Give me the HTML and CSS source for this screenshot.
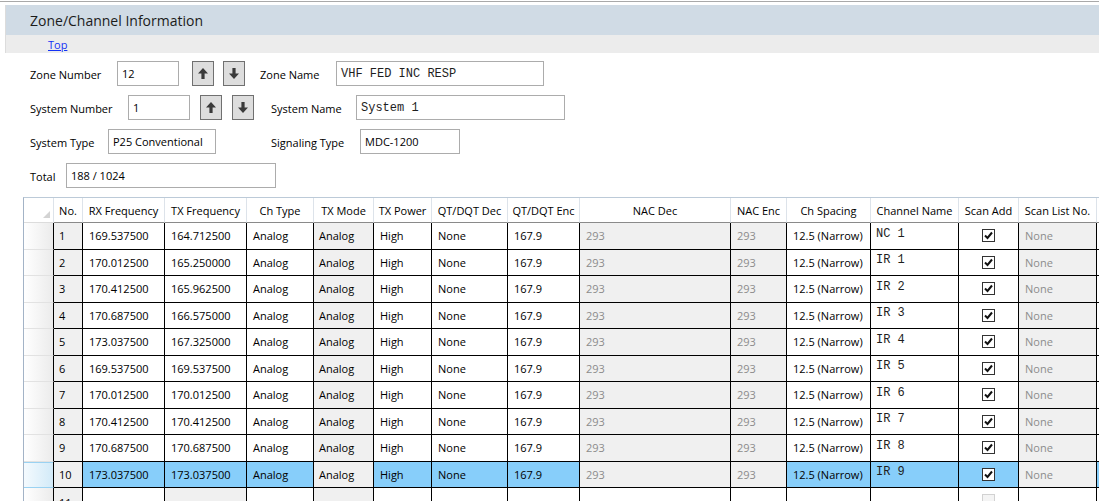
FILE: index.html
```html
<!DOCTYPE html>
<html>
<head>
<meta charset="utf-8">
<title>Zone/Channel Information</title>
<link rel="stylesheet" href="styles.css">
</head>
<body>
<div class="page">
  <div class="head">
    <div class="title-bar">Zone/Channel Information</div>
    <div class="nav-bar"><a href="#">Top</a></div>
  </div>

  <div class="form">
    <div class="frow">
      <span class="lbl w-zn">Zone Number</span>
      <span class="field w-62">12</span>
      <button class="spin ml-13"><svg width="10" height="11" viewBox="0 0 10 11"><path d="M5 0 L10 5.5 L6.6 5.5 L6.6 11 L3.4 11 L3.4 5.5 L0 5.5 Z" fill="#3a3a3a"/></svg></button>
      <button class="spin ml-9"><svg width="10" height="11" viewBox="0 0 10 11"><path d="M5 11 L10 5.5 L6.6 5.5 L6.6 0 L3.4 0 L3.4 5.5 L0 5.5 Z" fill="#3a3a3a"/></svg></button>
      <span class="lbl w-znm ml-15">Zone Name</span>
      <span class="field mono w-208">VHF FED INC RESP</span>
    </div>
    <div class="frow">
      <span class="lbl w-sn">System Number</span>
      <span class="field w-62">1</span>
      <button class="spin ml-10"><svg width="10" height="11" viewBox="0 0 10 11"><path d="M5 0 L10 5.5 L6.6 5.5 L6.6 11 L3.4 11 L3.4 5.5 L0 5.5 Z" fill="#3a3a3a"/></svg></button>
      <button class="spin ml-10"><svg width="10" height="11" viewBox="0 0 10 11"><path d="M5 11 L10 5.5 L6.6 5.5 L6.6 0 L3.4 0 L3.4 5.5 L0 5.5 Z" fill="#3a3a3a"/></svg></button>
      <span class="lbl w-snm ml-17">System Name</span>
      <span class="field mono w-209">System 1</span>
    </div>
    <div class="frow">
      <span class="lbl w-st">System Type</span>
      <span class="field w-108">P25 Conventional</span>
      <span class="lbl w-sg ml-55">Signaling Type</span>
      <span class="field w-100">MDC-1200</span>
    </div>
    <div class="frow">
      <span class="lbl w-tot">Total</span>
      <span class="field w-210">188 / 1024</span>
    </div>
  </div>

  <div class="grid-wrap">
    <div class="gr hd">
      <div class="h corner"><span class="tri"></span></div>
      <div class="h">No.</div>
      <div class="h">RX Frequency</div>
      <div class="h">TX Frequency</div>
      <div class="h">Ch Type</div>
      <div class="h">TX Mode</div>
      <div class="h">TX Power</div>
      <div class="h">QT/DQT Dec</div>
      <div class="h">QT/DQT Enc</div>
      <div class="h">NAC Dec</div>
      <div class="h">NAC Enc</div>
      <div class="h">Ch Spacing</div>
      <div class="h">Channel Name</div>
      <div class="h">Scan Add</div>
      <div class="h">Scan List No.</div>
      <div class="h"></div>
    </div>

    <div class="gr">
      <div class="rh"></div><div class="c ro">1</div><div class="c e">169.537500</div><div class="c e">164.712500</div><div class="c e">Analog</div><div class="c ro">Analog</div><div class="c e">High</div><div class="c e">None</div><div class="c e">167.9</div><div class="c dim">293</div><div class="c dim">293</div><div class="c e">12.5 (Narrow)</div><div class="c e mono">NC 1</div><div class="c e ctr"><span class="cb"><svg width="11" height="11" viewBox="0 0 11 11"><path d="M2 5.5 L4.5 8 L9 2.5" fill="none" stroke="#111" stroke-width="2"/></svg></span></div><div class="c dim">None</div><div class="c e"></div>
    </div>
    <div class="gr">
      <div class="rh"></div><div class="c ro">2</div><div class="c e">170.012500</div><div class="c e">165.250000</div><div class="c e">Analog</div><div class="c ro">Analog</div><div class="c e">High</div><div class="c e">None</div><div class="c e">167.9</div><div class="c dim">293</div><div class="c dim">293</div><div class="c e">12.5 (Narrow)</div><div class="c e mono">IR 1</div><div class="c e ctr"><span class="cb"><svg width="11" height="11" viewBox="0 0 11 11"><path d="M2 5.5 L4.5 8 L9 2.5" fill="none" stroke="#111" stroke-width="2"/></svg></span></div><div class="c dim">None</div><div class="c e"></div>
    </div>
    <div class="gr">
      <div class="rh"></div><div class="c ro">3</div><div class="c e">170.412500</div><div class="c e">165.962500</div><div class="c e">Analog</div><div class="c ro">Analog</div><div class="c e">High</div><div class="c e">None</div><div class="c e">167.9</div><div class="c dim">293</div><div class="c dim">293</div><div class="c e">12.5 (Narrow)</div><div class="c e mono">IR 2</div><div class="c e ctr"><span class="cb"><svg width="11" height="11" viewBox="0 0 11 11"><path d="M2 5.5 L4.5 8 L9 2.5" fill="none" stroke="#111" stroke-width="2"/></svg></span></div><div class="c dim">None</div><div class="c e"></div>
    </div>
    <div class="gr">
      <div class="rh"></div><div class="c ro">4</div><div class="c e">170.687500</div><div class="c e">166.575000</div><div class="c e">Analog</div><div class="c ro">Analog</div><div class="c e">High</div><div class="c e">None</div><div class="c e">167.9</div><div class="c dim">293</div><div class="c dim">293</div><div class="c e">12.5 (Narrow)</div><div class="c e mono">IR 3</div><div class="c e ctr"><span class="cb"><svg width="11" height="11" viewBox="0 0 11 11"><path d="M2 5.5 L4.5 8 L9 2.5" fill="none" stroke="#111" stroke-width="2"/></svg></span></div><div class="c dim">None</div><div class="c e"></div>
    </div>
    <div class="gr">
      <div class="rh"></div><div class="c ro">5</div><div class="c e">173.037500</div><div class="c e">167.325000</div><div class="c e">Analog</div><div class="c ro">Analog</div><div class="c e">High</div><div class="c e">None</div><div class="c e">167.9</div><div class="c dim">293</div><div class="c dim">293</div><div class="c e">12.5 (Narrow)</div><div class="c e mono">IR 4</div><div class="c e ctr"><span class="cb"><svg width="11" height="11" viewBox="0 0 11 11"><path d="M2 5.5 L4.5 8 L9 2.5" fill="none" stroke="#111" stroke-width="2"/></svg></span></div><div class="c dim">None</div><div class="c e"></div>
    </div>
    <div class="gr">
      <div class="rh"></div><div class="c ro">6</div><div class="c e">169.537500</div><div class="c e">169.537500</div><div class="c e">Analog</div><div class="c ro">Analog</div><div class="c e">High</div><div class="c e">None</div><div class="c e">167.9</div><div class="c dim">293</div><div class="c dim">293</div><div class="c e">12.5 (Narrow)</div><div class="c e mono">IR 5</div><div class="c e ctr"><span class="cb"><svg width="11" height="11" viewBox="0 0 11 11"><path d="M2 5.5 L4.5 8 L9 2.5" fill="none" stroke="#111" stroke-width="2"/></svg></span></div><div class="c dim">None</div><div class="c e"></div>
    </div>
    <div class="gr">
      <div class="rh"></div><div class="c ro">7</div><div class="c e">170.012500</div><div class="c e">170.012500</div><div class="c e">Analog</div><div class="c ro">Analog</div><div class="c e">High</div><div class="c e">None</div><div class="c e">167.9</div><div class="c dim">293</div><div class="c dim">293</div><div class="c e">12.5 (Narrow)</div><div class="c e mono">IR 6</div><div class="c e ctr"><span class="cb"><svg width="11" height="11" viewBox="0 0 11 11"><path d="M2 5.5 L4.5 8 L9 2.5" fill="none" stroke="#111" stroke-width="2"/></svg></span></div><div class="c dim">None</div><div class="c e"></div>
    </div>
    <div class="gr">
      <div class="rh"></div><div class="c ro">8</div><div class="c e">170.412500</div><div class="c e">170.412500</div><div class="c e">Analog</div><div class="c ro">Analog</div><div class="c e">High</div><div class="c e">None</div><div class="c e">167.9</div><div class="c dim">293</div><div class="c dim">293</div><div class="c e">12.5 (Narrow)</div><div class="c e mono">IR 7</div><div class="c e ctr"><span class="cb"><svg width="11" height="11" viewBox="0 0 11 11"><path d="M2 5.5 L4.5 8 L9 2.5" fill="none" stroke="#111" stroke-width="2"/></svg></span></div><div class="c dim">None</div><div class="c e"></div>
    </div>
    <div class="gr">
      <div class="rh"></div><div class="c ro">9</div><div class="c e">170.687500</div><div class="c e">170.687500</div><div class="c e">Analog</div><div class="c ro">Analog</div><div class="c e">High</div><div class="c e">None</div><div class="c e">167.9</div><div class="c dim">293</div><div class="c dim">293</div><div class="c e">12.5 (Narrow)</div><div class="c e mono">IR 8</div><div class="c e ctr"><span class="cb"><svg width="11" height="11" viewBox="0 0 11 11"><path d="M2 5.5 L4.5 8 L9 2.5" fill="none" stroke="#111" stroke-width="2"/></svg></span></div><div class="c dim">None</div><div class="c e"></div>
    </div>
    <div class="gr sel">
      <div class="rh"></div><div class="c ro">10</div><div class="c e">173.037500</div><div class="c e">173.037500</div><div class="c e">Analog</div><div class="c ro">Analog</div><div class="c e">High</div><div class="c e">None</div><div class="c e">167.9</div><div class="c dim">293</div><div class="c dim">293</div><div class="c e">12.5 (Narrow)</div><div class="c e mono">IR 9</div><div class="c e ctr"><span class="cb"><svg width="11" height="11" viewBox="0 0 11 11"><path d="M2 5.5 L4.5 8 L9 2.5" fill="none" stroke="#111" stroke-width="2"/></svg></span></div><div class="c dim">None</div><div class="c e"></div>
    </div>
    <div class="gr">
      <div class="rh"></div><div class="c ro top">11</div><div class="c"></div><div class="c ro"></div><div class="c"></div><div class="c ro"></div><div class="c"></div><div class="c"></div><div class="c"></div><div class="c"></div><div class="c"></div><div class="c"></div><div class="c"></div><div class="c ctr"><span class="cb off"></span></div><div class="c"></div><div class="c"></div>
    </div>
  </div>
</div>
</body>
</html>
```

FILE: styles.css
```css
* { box-sizing: border-box; }

html, body {
  margin: 0;
  padding: 0;
}

body {
  width: 1099px;
  height: 501px;
  overflow: hidden;
  background: #fff;
  color: #000;
  font-family: "Open Sans", "Noto Sans", sans-serif;
  font-size: 11px;
}

.page {
  margin-top: 1px;
  border-top: 1px solid #a9a9a9;
}

.head {
  margin: 3px 0 0 5px;
  border-left: 1px solid #dcdcdc;
}

.title-bar {
  height: 30px;
  background: #d0dbe5;
  padding-left: 24px;
  display: flex;
  align-items: center;
  font-size: 14px;
  color: #1b1b1b;
}

.nav-bar {
  height: 18px;
  background: #ececec;
  padding-left: 42px;
  display: flex;
  align-items: center;
}

.nav-bar a {
  color: #1432f5;
  text-decoration: underline;
}

/* form */
.form {
  padding: 8px 0 0 30px;
  display: flex;
  flex-direction: column;
  gap: 9px;
}

.frow {
  display: flex;
  align-items: center;
  height: 25px;
}

.lbl { flex: none; white-space: nowrap; padding-top: 1px; }

.field {
  flex: none;
  height: 25px;
  border: 1px solid #acacac;
  background: #fff;
  padding: 0 4px;
  display: flex;
  align-items: center;
  white-space: nowrap;
}

.mono {
  font-family: "Liberation Mono", "Courier New", monospace;
  font-size: 12px;
  color: #1e1e1e;
}

.spin {
  flex: none;
  width: 22px;
  height: 25px;
  padding: 0;
  background: #dddddd;
  border: 1px solid #707070;
  display: flex;
  align-items: center;
  justify-content: center;
}

.w-zn { width: 87px; }
.w-znm { width: 76px; }
.w-sn { width: 98px; }
.w-snm { width: 85px; }
.w-st { width: 78px; }
.w-sg { width: 89px; }
.w-tot { width: 36px; }
.w-62 { width: 62px; }
.w-100 { width: 100px; }
.w-108 { width: 108px; }
.w-208 { width: 208px; }
.w-209 { width: 209px; }
.w-210 { width: 210px; }
.ml-9 { margin-left: 9px; }
.ml-10 { margin-left: 10px; }
.ml-13 { margin-left: 13px; }
.ml-15 { margin-left: 15px; }
.ml-17 { margin-left: 17px; }
.ml-55 { margin-left: 55px; }

/* data grid */
.grid-wrap {
  margin: 9px 0 0 23px;
  width: max-content;
  border-left: 1px solid #a3b3c6;
  border-top: 1px solid #bccad8;
}

.gr {
  display: grid;
  grid-template-columns: 30px 29px 82px 82px 67px 60px 58px 76px 72px 151px 56px 84px 88px 60px 78px 100px;
  height: 26.5px;
}

.gr.hd { height: 25px; }

.h {
  display: flex;
  align-items: center;
  justify-content: center;
  white-space: nowrap;
  background: #fff;
  border-right: 1px solid #dde3ea;
  border-bottom: 1px solid #8a8a8a;
}

.h.corner {
  position: relative;
  border-bottom-color: #dcdcdc;
}

.tri {
  position: absolute;
  right: 3px;
  bottom: 4px;
  width: 0;
  height: 0;
  border-left: 7px solid transparent;
  border-bottom: 7px solid #d3d3d3;
}

.c {
  display: flex;
  align-items: center;
  padding: 0 5px 0 6px;
  white-space: nowrap;
  overflow: hidden;
  background: #fff;
  border-right: 1px solid #000;
  border-bottom: 1px solid #000;
}

.c.ro { background: #f0f0f0; padding-left: 5px; }
.c.dim { background: #f0f0f0; color: #8c8c8c; }
.c.mono { font-size: 12px; padding: 0 5px 4px 5px; }
.c.ctr { justify-content: center; padding: 0; }
.c.top { align-items: flex-start; padding-top: 7px; }

.rh {
  background: linear-gradient(to right, #ffffff, #ebebeb);
  border-right: 1px solid #000;
  border-bottom: 1px solid #e2e2e2;
}

.cb {
  width: 13px;
  height: 13px;
  border: 1px solid #333;
  background: #fff;
  display: flex;
  align-items: center;
  justify-content: center;
}

.cb.off {
  border-color: #d2d2d2;
  background: #f4f4f4;
}

.sel .c.e { background: #87cefa; }

.sel .rh {
  background: linear-gradient(to right, #f4fafe, #d2eaf8);
  border-bottom-color: #9ad2f2;
  box-shadow: inset 0 1px 0 #9ad2f2;
}
```
